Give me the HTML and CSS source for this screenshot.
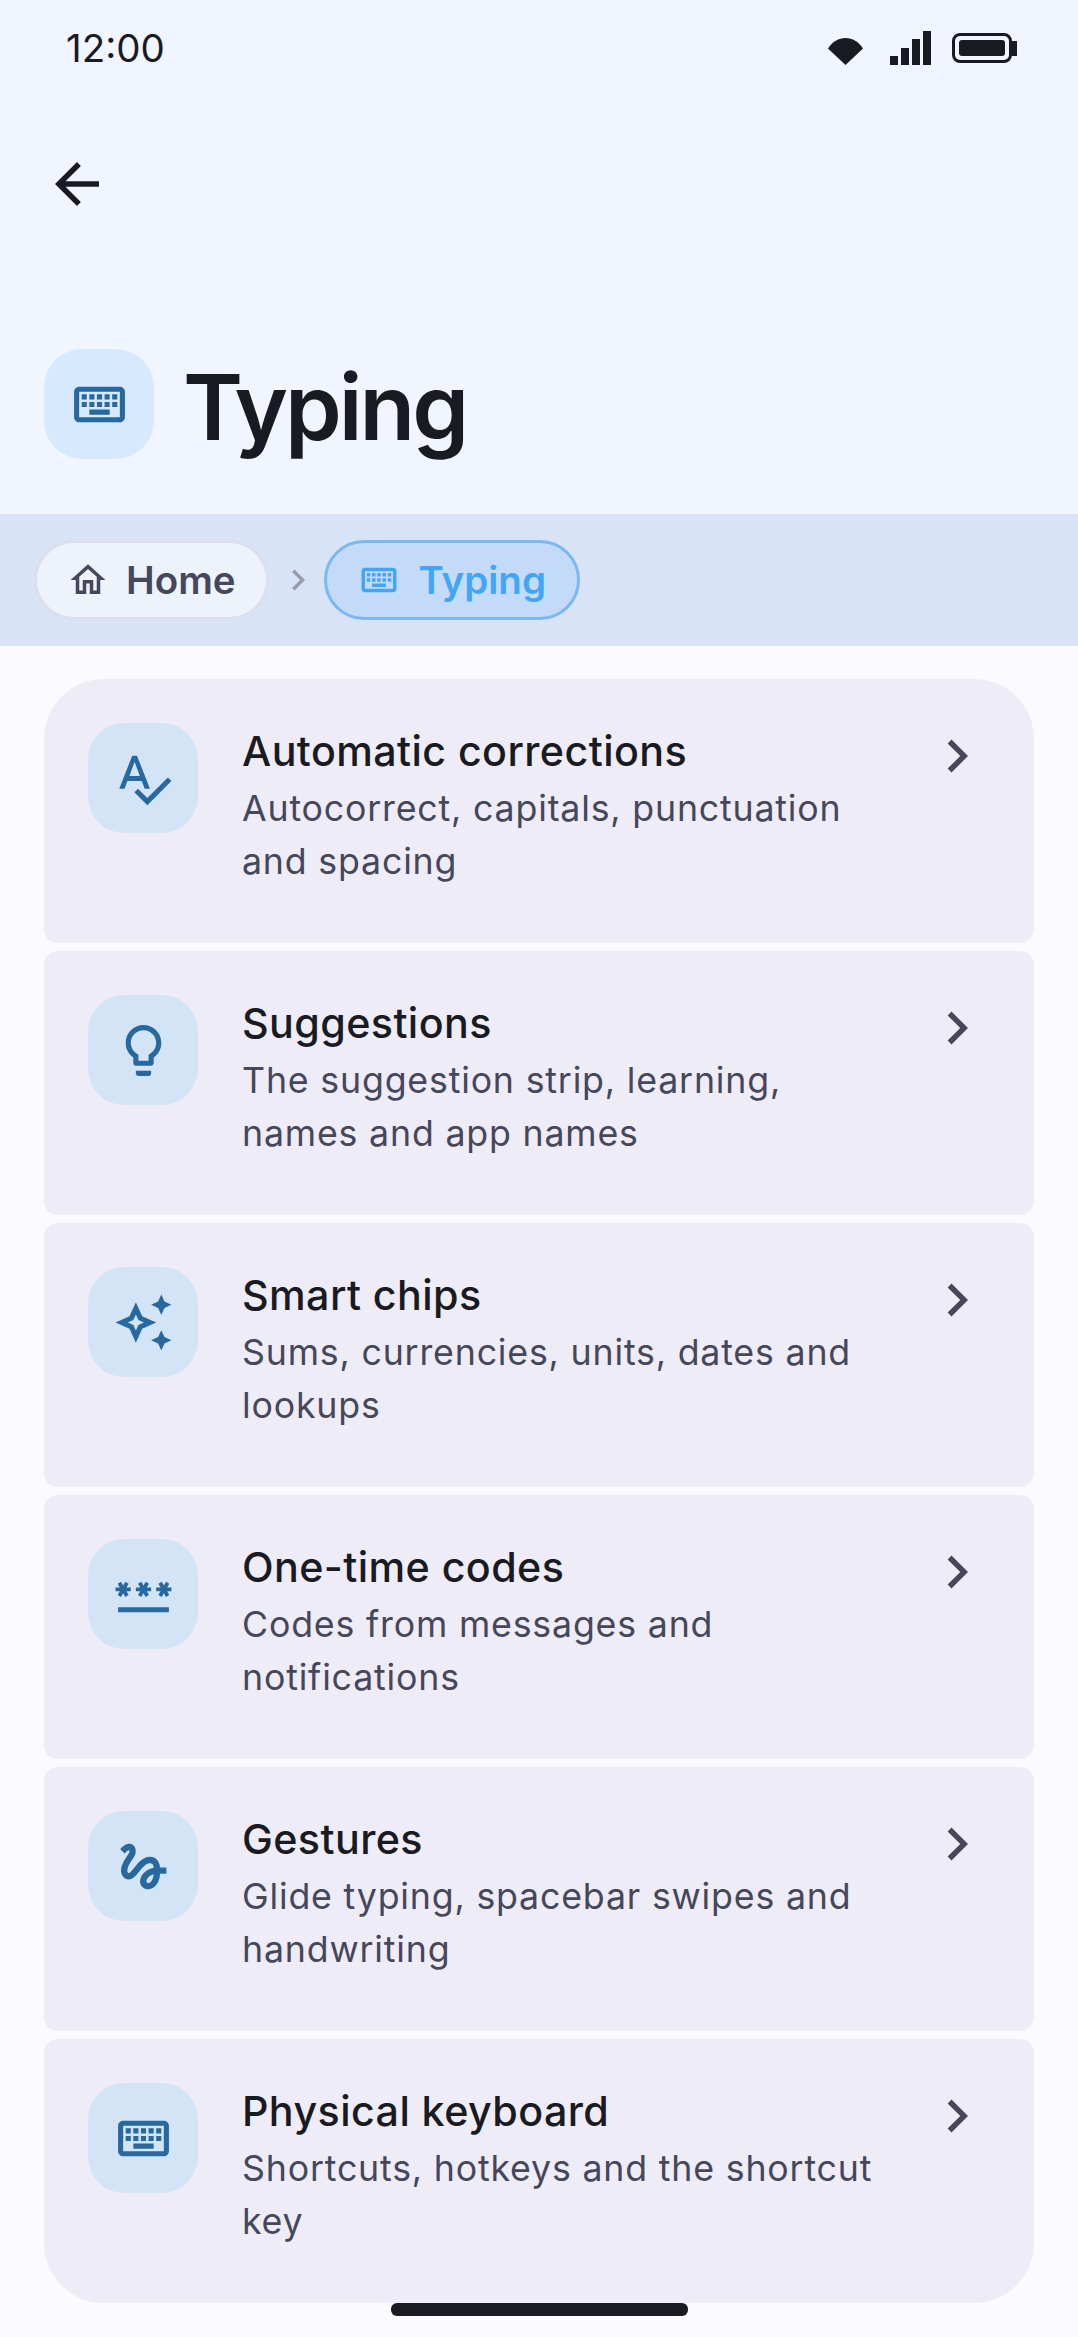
FILE: index.html

```html
<!DOCTYPE html>
<html lang="en">
<head>
  <meta charset="UTF-8" />
  <meta name="viewport" content="width=device-width, initial-scale=1.0"/>
  <title>Typing</title>
  <link rel="stylesheet" href="styles.css">
</head>
<body>
  <svg class="defs" width="0" height="0">
    <symbol id="kbd" viewBox="0 0 24 24">
      <path d="M20 7v10H4V7h16m0-2H4c-1.1 0-1.99.9-1.99 2L2 17c0 1.1.9 2 2 2h16c1.1 0 2-.9 2-2V7c0-1.1-.9-2-2-2zm-9 3h2v2h-2zm0 3h2v2h-2zM8 8h2v2H8zm0 3h2v2H8zm-3 0h2v2H5zm0-3h2v2H5zm3 6h8v2H8zm6-3h2v2h-2zm0-3h2v2h-2zm3 3h2v2h-2zm0-3h2v2h-2z"/>
    </symbol>
    <symbol id="chev" viewBox="0 0 24 24">
      <path d="M10 6L8.59 7.41 13.17 12l-4.58 4.59L10 18l6-6z"/>
    </symbol>
  </svg>

  <header class="top">
    <div class="status">
      <span class="time">12:00</span>
      <div class="status-icons">
        <svg class="wifi" width="35" height="27" viewBox="0 0 35 27"><path d="M0 10.5C4.5 3.5 10.5 0 17.5 0S30.5 3.5 35 10.5L17.5 27z"/></svg>
        <div class="signal"><i class="b1"></i><i class="b2"></i><i class="b3"></i><i class="b4"></i></div>
        <div class="battery"><div class="cell"><div class="charge"></div></div><div class="nub"></div></div>
      </div>
    </div>
    <div class="back">
      <svg width="66" height="66" viewBox="0 0 24 24" fill="#1a1b22"><path d="M20 11H7.83l5.59-5.59L12 4l-8 8 8 8 1.41-1.41L7.83 13H20v-2z"/></svg>
    </div>
    <div class="heading">
      <div class="tile tile-big"><svg class="ico" width="61" height="61"><use href="#kbd"/></svg></div>
      <h1>Typing</h1>
    </div>
  </header>

  <nav class="crumbs">
    <div class="chip">
      <svg width="42" height="42" viewBox="0 0 24 24" fill="#46475a"><path d="M12 5.69l5 4.5V18h-2v-6H9v6H7v-7.81l5-4.5M12 3L2 12h3v8h6v-6h2v6h6v-8h3L12 3z"/></svg>
      <span>Home</span>
    </div>
    <svg class="sep" width="42" height="42"><use href="#chev"/></svg>
    <div class="chip chip-on">
      <svg width="42" height="42"><use href="#kbd"/></svg>
      <span>Typing</span>
    </div>
  </nav>

  <main class="list">
    <a class="row first">
      <div class="tile">
        <svg class="ico" width="61" height="61" viewBox="0 0 24 24"><path d="M12.45 16h2.09L9.43 3H7.57L2.46 16h2.09l1.12-3h5.64l1.14 3zm-6.02-5L8.5 5.48 10.57 11H6.43zm15.16.59l-8.09 8.09L9.83 16l-1.41 1.41 5.09 5.09L23 13l-1.41-1.41z"/></svg>
      </div>
      <div class="text">
        <h2>Automatic corrections</h2>
        <p>Autocorrect, capitals, punctuation and spacing</p>
      </div>
      <svg class="go" width="66" height="66"><use href="#chev"/></svg>
    </a>

    <a class="row">
      <div class="tile">
        <svg class="ico" width="61" height="61" viewBox="0 0 24 24"><path d="M9 21c0 .55.45 1 1 1h4c.55 0 1-.45 1-1v-1H9v1zm3-19C8.14 2 5 5.14 5 9c0 2.38 1.19 4.47 3 5.74V17c0 .55.45 1 1 1h6c.55 0 1-.45 1-1v-2.26c1.81-1.27 3-3.36 3-5.74 0-3.86-3.14-7-7-7zm2.85 11.1l-.85.6V16h-4v-2.3l-.85-.6C7.8 12.16 7 10.63 7 9c0-2.76 2.24-5 5-5s5 2.24 5 5c0 1.63-.8 3.16-2.15 4.1z"/></svg>
      </div>
      <div class="text">
        <h2>Suggestions</h2>
        <p>The suggestion strip, learning, names and app names</p>
      </div>
      <svg class="go" width="66" height="66"><use href="#chev"/></svg>
    </a>

    <a class="row">
      <div class="tile">
        <svg class="ico" width="61" height="61" viewBox="0 0 24 24"><path d="M19 9l1.25-2.75L23 5l-2.75-1.25L19 1l-1.25 2.75L15 5l2.75 1.25L19 9zm-7.5.5L9 4 6.5 9.5 1 12l5.5 2.5L9 20l2.5-5.5L17 12l-5.5-2.5zM9.99 12.99L9 15.17l-.99-2.18L5.83 12l2.18-.99L9 8.83l.99 2.18 2.18.99-2.18.99zM19 15l-1.25 2.75L15 19l2.75 1.25L19 23l1.25-2.75L23 19l-2.75-1.25L19 15z"/></svg>
      </div>
      <div class="text">
        <h2>Smart chips</h2>
        <p>Sums, currencies, units, dates and lookups</p>
      </div>
      <svg class="go" width="66" height="66"><use href="#chev"/></svg>
    </a>

    <a class="row">
      <div class="tile">
        <svg class="ico" width="61" height="61" viewBox="0 0 24 24"><path d="M2 17h20v2H2v-2zm1.15-4.05L4 11.47l.85 1.48 1.3-.75-.85-1.48H7v-1.5H5.3l.85-1.47L4.85 7 4 8.47 3.15 7l-1.3.75.85 1.47H1v1.5h1.7l-.85 1.48 1.3.75zm6.7-.75l1.3.75.85-1.48.85 1.48 1.3-.75-.85-1.48H15v-1.5h-1.7l.85-1.47-1.3-.75L12 8.47 11.15 7l-1.3.75.85 1.47H9v1.5h1.7l-.85 1.48zM23 9.22h-1.7l.85-1.47-1.3-.75L20 8.47 19.15 7l-1.3.75.85 1.47H17v1.5h1.7l-.85 1.48 1.3.75.85-1.48.85 1.48 1.3-.75-.85-1.48H23v-1.5z"/></svg>
      </div>
      <div class="text">
        <h2>One-time codes</h2>
        <p>Codes from messages and notifications</p>
      </div>
      <svg class="go" width="66" height="66"><use href="#chev"/></svg>
    </a>

    <a class="row">
      <div class="tile">
        <svg class="ico" width="61" height="61" viewBox="0 0 24 24"><path d="M4.59 6.89c.7-.71 1.4-1.35 1.71-1.22.5.2 0 1.03-.3 1.52-.25.42-2.86 3.89-2.86 6.31 0 1.28.48 2.34 1.34 2.98.75.56 1.74.73 2.64.46 1.07-.31 1.95-1.4 3.06-2.77 1.21-1.49 2.83-3.44 4.08-3.44 1.63 0 1.65 1.01 1.76 1.79-3.78.64-5.38 3.67-5.38 5.37 0 1.7 1.44 3.09 3.21 3.09 1.63 0 4.29-1.33 4.69-6.1H21v-2.5h-2.47c-.15-1.65-1.09-4.2-4.03-4.2-2.25 0-4.18 1.91-4.94 2.84-.58.73-2.06 2.48-2.29 2.72-.25.3-.68.84-1.11.84-.45 0-.72-.83-.36-1.92.35-1.09 1.4-2.86 1.85-3.52.78-1.14 1.3-1.92 1.3-3.28C8.95 3.69 7.31 3 6.44 3 5.12 3 3.97 4 3.72 4.25c-.36.36-.66.66-.88.93l1.75 1.71zm9.29 11.66c-.31 0-.74-.26-.74-.72 0-.6.73-2.2 2.87-2.76-.3 2.69-1.43 3.48-2.13 3.48z"/></svg>
      </div>
      <div class="text">
        <h2>Gestures</h2>
        <p>Glide typing, spacebar swipes and handwriting</p>
      </div>
      <svg class="go" width="66" height="66"><use href="#chev"/></svg>
    </a>

    <a class="row last">
      <div class="tile">
        <svg class="ico" width="61" height="61"><use href="#kbd"/></svg>
      </div>
      <div class="text">
        <h2>Physical keyboard</h2>
        <p>Shortcuts, hotkeys and the shortcut key</p>
      </div>
      <svg class="go" width="66" height="66"><use href="#chev"/></svg>
    </a>
  </main>

  <div class="home-bar"></div>
</body>
</html>
```

FILE: styles.css

```css
* { box-sizing: border-box; }
html, body { margin: 0; padding: 0; }
body { width: 1078px; height: 2337px; position: relative; overflow: hidden; background: #fbfaff; font-family: Inter, "Noto Sans", sans-serif; color: #1a1b22; }
.defs { position: absolute; }

.top { height: 514px; background: #f1f5ff; padding-top: 26px; }
.status { display: flex; justify-content: space-between; align-items: center; height: 44px; padding: 0 61px 0 66px; }
.time { font-size: 38.5px; line-height: 44px; }
.status-icons { display: flex; align-items: flex-end; }
.wifi { margin-right: 27px; fill: #1a1b22; }
.signal { display: flex; align-items: flex-end; gap: 3px; margin-right: 21px; }
.signal i { display: block; width: 8px; background: #1a1b22; }
.b1 { height: 9px; }
.b2 { height: 17px; }
.b3 { height: 26px; }
.b4 { height: 34px; }
.battery { display: flex; align-items: center; margin-bottom: 2px; }
.cell { width: 60px; height: 30px; padding: 4px; border: 3px solid #1a1b22; border-radius: 8px; }
.charge { height: 100%; background: #1a1b22; border-radius: 3px; }
.nub { width: 5px; height: 15px; background: #1a1b22; }

.back { height: 279px; padding: 81px 0 0 44px; }
.back svg { display: block; }
.heading { display: flex; align-items: center; gap: 29px; padding: 0 44px; }
h1 { margin: 6px 0 0; font-size: 91px; font-weight: 600; line-height: 104px; letter-spacing: -3px; }

.tile { flex: none; display: flex; align-items: center; justify-content: center; width: 110px; height: 110px; border-radius: 36px; background: #d4e4f7; }
.tile-big { background: #d7e9ff; border-radius: 38px; }
.ico { fill: #27689f; }

.crumbs { display: flex; align-items: center; height: 132px; padding: 0 34px; background: #d8e3f7; }
.chip { display: flex; align-items: center; gap: 17px; height: 80px; padding: 0 30px; border: 3px solid #dcdfea; border-radius: 40px; background: #eef2fd; font-size: 38.5px; font-weight: 600; color: #46475a; }
.chip-on { gap: 19px; padding: 0 31px; background: #c3dbf8; border-color: #7ab8f2; color: #42a5f5; fill: #42a5f5; }
.sep { margin: 0 5px 0 8px; fill: #9a9cab; }

.list { display: flex; flex-direction: column; gap: 8px; padding: 33px 44px 0; }
.row { display: flex; align-items: flex-start; height: 264px; padding: 44px; background: #eeedf7; border-radius: 14px; }
.first { border-radius: 60px 60px 14px 14px; }
.last { border-radius: 14px 14px 60px 60px; }
.text { flex: 1; margin: 0 33px 0 44px; padding-top: 6px; }
h2 { margin: 0; font-size: 41.25px; font-weight: 450; line-height: 44px; letter-spacing: .4px; }
p { margin: 9px 0 0; font-size: 35.75px; line-height: 53px; letter-spacing: .8px; color: #46475a; }
.go { flex: none; fill: #46475a; }

.home-bar { position: absolute; left: 391px; top: 2303px; width: 297px; height: 13px; border-radius: 6px; background: #1a1b22; }
```
